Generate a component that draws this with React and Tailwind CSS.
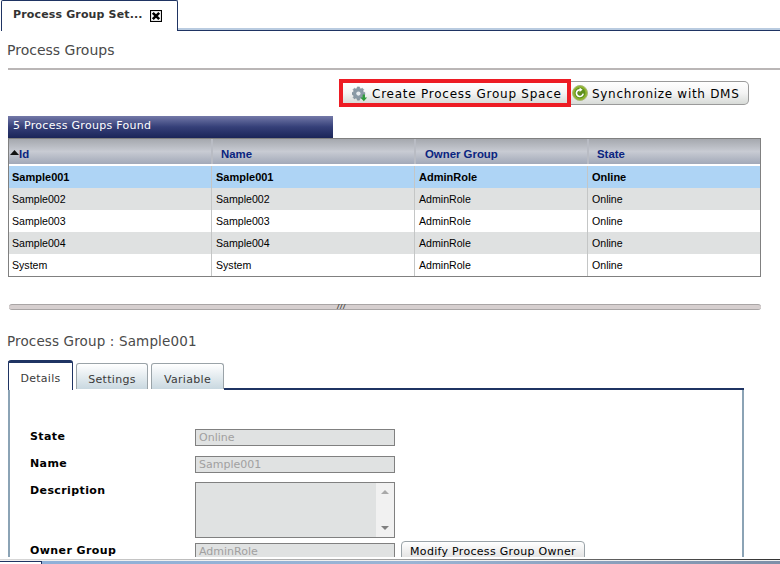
const verdana = 'font-["DejaVu_Sans",sans-serif]';
const arial = 'font-["Liberation_Sans",Arial,sans-serif]';

function GearIcon() {
  return (
    <svg width="16" height="16" viewBox="0 0 18 18" className="shrink-0 -mt-[1px]">
      <g fill="#8a9aa6" stroke="#6f7f8b" strokeWidth="0.5">
        <path d="M6 1h2.4l.4 1.7 1.3.6 1.5-.9 1.6 1.6-.9 1.5.6 1.4 1.6.4v2.4l-1.6.4-.6 1.3.9 1.5-1.6 1.6-1.5-.9-1.3.6-.4 1.7H6l-.4-1.7-1.3-.6-1.5.9-1.6-1.6.9-1.5-.6-1.3L0 9.7V7.3l1.5-.4.6-1.4-.9-1.5 1.6-1.6 1.5.9 1.3-.6z" />
      </g>
      <circle cx="7.2" cy="8.5" r="2.4" fill="#e8ecef" />
      <path d="M12 9.5h2.6v3.5H17l-3.7 4.2L9.6 13H12z" fill="#2f9a3a" />
    </svg>
  );
}

function SyncIcon() {
  return (
    <svg width="16" height="16" viewBox="0 0 16 16" className="shrink-0 -mt-[3px]">
      <circle cx="8" cy="8" r="7.5" fill="#8fb52e" stroke="#a9b87a" />
      <circle cx="8" cy="8" r="5.4" fill="#5f8f1e" />
      <path d="M11.2 8.6A3.4 3.4 0 1 1 8.6 4.8" fill="none" stroke="#fff" strokeWidth="1.6" />
      <path d="M7.6 2.6l3 2.2-3 2.2z" fill="#fff" />
    </svg>
  );
}

function CloseBox() {
  return (
    <svg width="12" height="12" viewBox="0 0 12 12" className="shrink-0">
      <rect x="0.5" y="0.5" width="11" height="11" fill="#fff" stroke="#000" strokeWidth="1.2" />
      <path d="M2.8 2.8l6.4 6.4M9.2 2.8l-6.4 6.4" stroke="#000" strokeWidth="2.6" />
    </svg>
  );
}

const rows = [
  ["Sample001", "Sample001", "AdminRole", "Online"],
  ["Sample002", "Sample002", "AdminRole", "Online"],
  ["Sample003", "Sample003", "AdminRole", "Online"],
  ["Sample004", "Sample004", "AdminRole", "Online"],
  ["System", "System", "AdminRole", "Online"],
];

const cols = "grid grid-cols-[202px_203px_173px_1fr]";
const labelCls = `w-[165px] text-[11px] leading-[14px] font-bold tracking-[0.4px] text-black ${verdana}`;
const inputCls = `w-[200px] h-[17px] border border-[#808080] bg-[#e0e2e2] px-[3px] text-[11px] leading-[16px] text-[#a0a0a0] ${verdana}`;

export default function App() {
  return (
    <div className="w-[780px] h-[564px] flex flex-col overflow-hidden bg-white">
      <div className="flex-1 min-h-0 overflow-hidden">
        {/* top tab bar */}
        <div className="h-[31px] flex pl-[1px]">
          <div className={`w-[177px] h-[31px] border-t border-x border-[#1f3463] rounded-t-[2px] bg-white flex items-center gap-[7px] pl-[11px] pb-[1px] text-[11px] font-bold tracking-[0.15px] text-[#333] ${verdana}`}>
            <span>Process Group Set...</span>
            <CloseBox />
          </div>
          <div className="flex-1 h-[31px] flex flex-col justify-end">
            <div className="h-[2px] bg-[#b9cbe0]" />
            <div className="h-[1px] bg-[#1f3463]" />
          </div>
        </div>

        <div className="pl-[7px] pt-[10px]">
          <h1 className={`text-[14px] leading-[18px] text-[#4a4a4a] ${verdana}`}>Process Groups</h1>
          <div className="ml-[1px] mt-[9px] h-[2px] bg-[#bab6b6]" />
        </div>

        {/* toolbar */}
        <div className="h-[46px] flex items-start pl-[339px] pt-[9px]">
          <div className="h-[28px] w-[232px] border-[4px] border-[#ed1c24] flex">
            <button className={`w-full h-full bg-gradient-to-b from-white via-[#f4f4f4] to-[#d8dbd8] flex items-center gap-[4px] pl-[9px] pt-[2px] text-[12px] tracking-[0.76px] text-black ${verdana}`}>
              <GearIcon />
              <span>Create Process Group Space</span>
            </button>
          </div>
          <button className={`w-[178px] h-[24px] mt-[2px] border border-l-0 border-[#9a9a9a] rounded-r-[5px] bg-gradient-to-b from-white via-[#f4f4f4] to-[#d8dbd8] flex items-center gap-[4px] pl-[1px] pt-[2px] text-[12px] tracking-[0.7px] text-black ${verdana}`}>
            <SyncIcon />
            <span>Synchronize with DMS</span>
          </button>
        </div>

        {/* grid title */}
        <div className="pl-[8px]">
          <div className={`w-[325px] h-[22px] bg-gradient-to-b from-[#7479a8] via-[#353f78] to-[#1b2558] pl-[5px] text-[11px] leading-[20px] tracking-[0.28px] text-white ${verdana}`}>
            5 Process Groups Found
          </div>
        </div>

        {/* grid */}
        <div className="ml-[8px] w-[753px] h-[139px] border border-[#808080] bg-white overflow-hidden">
          <div className={`${cols} h-[27px] bg-gradient-to-b from-[#a5a8ae] via-[#c8cbd3] to-[#a2a9b8] border-b-2 border-white text-[11.4px] font-bold text-[#0a2480] ${arial}`}>
            <div className="flex items-center pl-[1px] pt-[6px]">
              <svg width="9" height="5" viewBox="0 0 9 5" className="shrink-0 -mt-[4px]"><path d="M4.5 0L9 5H0z" fill="#111" /></svg>
              <span>Id</span>
            </div>
            <div className="border-l-2 border-[#b9bcc4] flex items-center pl-[8px] pt-[6px]">Name</div>
            <div className="border-l-2 border-[#b9bcc4] flex items-center pl-[9px] pt-[6px]">Owner Group</div>
            <div className="border-l-2 border-[#b9bcc4] flex items-center pl-[8px] pt-[6px]">State</div>
          </div>
          {rows.map((r, i) => (
            <div
              key={i}
              className={`${cols} h-[22px] leading-[22px] text-black ${arial} ${i === 0 ? "bg-[#aed4f5] font-bold text-[11px]" : i % 2 === 1 ? "bg-[#dfe1e1] text-[10.6px]" : "bg-white text-[10.6px]"}`}
            >
              {r.map((c, j) => (
                <div key={j} className={j > 0 ? "border-l border-[#c4c6c6] pl-[4px]" : "pl-[3px]"}>{c}</div>
              ))}
            </div>
          ))}
        </div>

        {/* splitter */}
        <div className="ml-[9px] w-[752px] mt-[27px] h-[6px] rounded-full bg-[#d6cfcf] border-y border-[#a9a5a5] flex items-center pl-[328px]">
          <span className="text-[7px] leading-[4px] italic text-[#444] font-['Liberation_Sans',sans-serif] tracking-[1px] font-bold">///</span>
        </div>

        <h2 className={`ml-[7px] mt-[22px] text-[13.5px] leading-[18px] tracking-[0.14px] text-[#4a4a4a] ${verdana}`}>Process Group : Sample001</h2>

        {/* detail tabs */}
        <div className={`ml-[8px] mr-[36px] mt-[10px] h-[30px] flex items-end text-[11px] tracking-[0.3px] text-[#3a3a3a] ${verdana}`}>
          <div className="w-[65px] h-[30px] border-t-[3px] border-x border-t-[#1f3463] border-x-[#1f3463] rounded-t-[3px] bg-white flex justify-center pt-[8px]">Details</div>
          <div className="ml-[3px] w-[72px] h-[26px] mb-[1px] border-t border-x border-[#9aa3a8] rounded-t-[3px] bg-gradient-to-b from-white to-[#c9d8e0] flex justify-center pt-[8px]">Settings</div>
          <div className="ml-[3px] w-[73px] h-[26px] mb-[1px] border-t border-x border-[#9aa3a8] rounded-t-[3px] bg-gradient-to-b from-white to-[#c9d8e0] flex justify-center pt-[8px]">Variable</div>
          <div className="flex-1 h-[2px] bg-[#1f3463]" />
        </div>

        {/* detail panel */}
        <div className="ml-[8px] w-[736px] h-[200px] border-x-2 border-x-[#8ba3b5] pl-[20px] pt-[39px]">
          <div className="flex mb-[10px]">
            <div className={`${labelCls} pt-[1px]`}>State</div>
            <div className={inputCls}>Online</div>
          </div>
          <div className="flex mb-[9px]">
            <div className={`${labelCls} pt-[1px]`}>Name</div>
            <div className={inputCls}>Sample001</div>
          </div>
          <div className="flex mb-[5px]">
            <div className={`${labelCls} pt-[2px]`}>Description</div>
            <div className="w-[200px] h-[56px] border border-[#808080] flex">
              <div className="flex-1 bg-[#e0e2e2]" />
              <div className="w-[18px] bg-[#f1f1f1] flex flex-col items-center justify-between py-[7px]">
                <svg width="8" height="4" viewBox="0 0 8 4"><path d="M4 0l4 4H0z" fill="#a9a9a9" /></svg>
                <svg width="8" height="4" viewBox="0 0 8 4"><path d="M4 4L0 0h8z" fill="#808080" /></svg>
              </div>
            </div>
          </div>
          <div className="flex">
            <div className={`${labelCls} pt-[1px]`}>Owner Group</div>
            <div className={inputCls}>AdminRole</div>
            <button className={`ml-[6px] -mt-[2px] w-[184px] h-[24px] shrink-0 border border-[#9aa3a8] rounded-[4px] bg-gradient-to-b from-white to-[#d8d8d8] text-[11px] tracking-[0.3px] leading-[20px] text-black text-center pb-[2px] ${verdana}`}>Modify Process Group Owner</button>
          </div>
        </div>
      </div>

      {/* bottom edge */}
      <div className="h-[7px] shrink-0 flex flex-col">
        <div className="h-[2px] bg-white" />
        <div className="h-[1px] bg-gradient-to-r from-[#d8d8d8] via-[#a0a0a0] to-[#333]" />
        <div className="h-[1px] bg-[#f0f0f0]" />
        <div className="h-[3px] flex">
          <div className="w-[42px] bg-white border-t border-r border-[#1f3463]" />
          <div className="flex-1 bg-gradient-to-r from-[#8fb0d8] via-[#9ab4d4] to-[#7d8fa8]" />
        </div>
      </div>
    </div>
  );
}
